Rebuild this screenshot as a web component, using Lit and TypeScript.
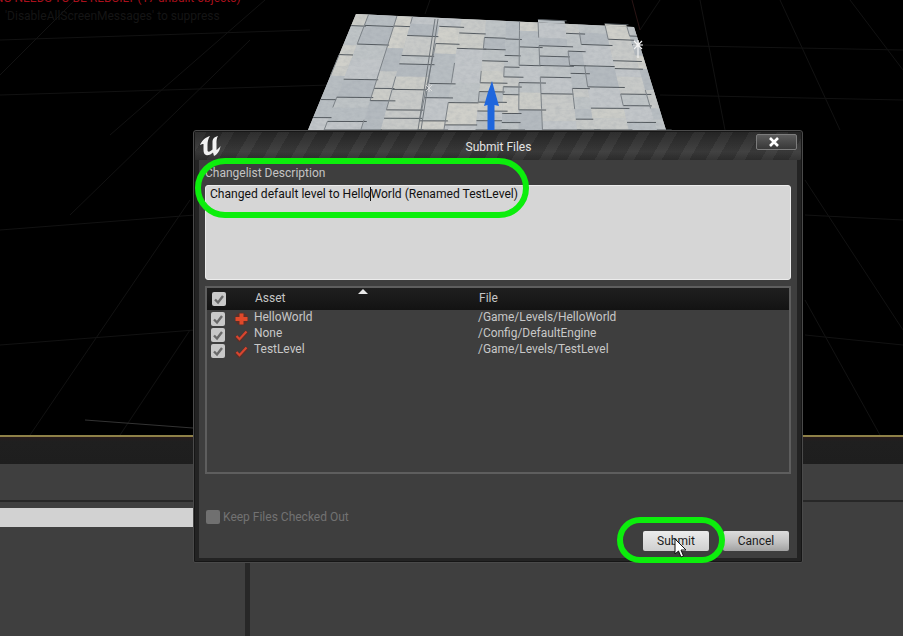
import { LitElement, css, html, svg } from 'lit';
import { customElement } from 'lit/decorators.js';

const FLOOR = { tl: [356, 14], tr: [634, 27], br: [666, 130], bl: [308, 130] };

// bilinear mapping of the floor quad, u/v in 0..1
function mapFloor(u: number, v: number): [number, number] {
  const topX = FLOOR.tl[0] + (FLOOR.tr[0] - FLOOR.tl[0]) * u;
  const topY = FLOOR.tl[1] + (FLOOR.tr[1] - FLOOR.tl[1]) * u;
  const botX = FLOOR.bl[0] + (FLOOR.br[0] - FLOOR.bl[0]) * u;
  const botY = FLOOR.bl[1] + (FLOOR.br[1] - FLOOR.bl[1]) * u;
  return [topX + (botX - topX) * v, topY + (botY - topY) * v];
}

const pt = (u: number, v: number) => mapFloor(u, v).join(',');

interface Tile {
  pts: string;
  fill: string;
  bottom: number[] | null;
  side: number[] | null;
}

function makeTiles() {
  let seed = 29;
  const rnd = () => {
    seed = (seed * 16807) % 2147483647;
    return seed / 2147483647;
  };
  const shades = ['#bfc4c6', '#c8cac8', '#b8bec2', '#cccdc8', '#c2c6c9', '#b4babf', '#d0d0ca'];
  const tiles: Tile[] = [];
  let u = 0;
  while (u < 1) {
    const w = 0.045 + rnd() * 0.06;
    const u1 = Math.min(u + w, 1);
    let v = -rnd() * 0.12;
    while (v < 1) {
      const h = 0.07 + rnd() * 0.14;
      const v0 = Math.max(v, 0);
      const v1 = Math.min(v + h, 1);
      const a = mapFloor(u, v1);
      const b = mapFloor(u1 + 0.02 * rnd(), v1);
      const c = mapFloor(u, v0);
      tiles.push({
        pts: [pt(u, v0), pt(u1, v0), pt(u1, v1), pt(u, v1)].join(' '),
        fill: shades[Math.floor(rnd() * shades.length)],
        bottom: rnd() > 0.3 ? [a[0], a[1], b[0], b[1]] : null,
        side: rnd() > 0.5 ? [a[0], a[1], c[0], c[1]] : null,
      });
      v += h;
    }
    u += w;
  }
  return tiles;
}

const TILES = makeTiles();

const GRID_LINES: number[][] = [
  [0, 40, 310, 30], [640, 45, 903, 50], [0, 95, 330, 85], [660, 95, 903, 100],
  [0, 230, 195, 215], [805, 215, 903, 220], [0, 345, 195, 330], [805, 335, 903, 345],
  [75, 0, 0, 75], [265, 0, 110, 135], [250, 40, 70, 215], [190, 200, 30, 435],
  [430, 0, 425, 14], [660, 0, 640, 30], [700, 0, 725, 130], [780, 0, 840, 130],
  [850, 0, 903, 70], [805, 180, 903, 330], [805, 300, 880, 435], [190, 330, 120, 435],
];

const ROWS = [
  { asset: 'HelloWorld', file: '/Game/Levels/HelloWorld', added: true },
  { asset: 'None', file: '/Config/DefaultEngine', added: false },
  { asset: 'TestLevel', file: '/Game/Levels/TestLevel', added: false },
];

const checkMark = svg`<path d="M3 7.5 L6 10.5 L11 4" fill="none" stroke="#6a6a6a" stroke-width="2.4"/>`;

@customElement('app-root')
export class AppRoot extends LitElement {
  static styles = css`
    :host {
      display: block;
      position: relative;
      width: 903px;
      height: 636px;
      overflow: hidden;
      background: #3f3f3f;
      font-family: Roboto, 'Liberation Sans', sans-serif;
      font-size: 12px;
      color: #c8c8c8;
    }

    .viewport {
      position: relative;
      height: 435px;
      background: #000;
      overflow: hidden;
    }

    .viewport svg {
      display: block;
    }

    .warn {
      position: absolute;
      left: -42px;
      top: -9px;
      color: #a8101c;
      font-size: 12px;
      white-space: nowrap;
    }

    .hint {
      position: absolute;
      left: 5px;
      top: 9px;
      color: #151515;
      font-size: 12px;
      white-space: nowrap;
    }

    .gold {
      height: 2px;
      background: #8f8148;
    }

    .tabstrip {
      height: 27px;
      background: linear-gradient(#2a1d1d 0, #1f1f1f 4px, #1e1e1e 100%);
    }

    .toolbar {
      height: 36px;
      border-bottom: 2px solid #272727;
    }

    .search {
      width: 193px;
      height: 19px;
      margin-top: 6px;
      background: #d2d2d2;
    }

    .lower {
      display: flex;
      height: 109px;
    }

    .lower .left {
      width: 245px;
    }

    .lower .bar {
      width: 5px;
      background: #272727;
    }

    .dialog {
      position: absolute;
      left: 193px;
      top: 130px;
      width: 610px;
      height: 433px;
      box-sizing: border-box;
      display: flex;
      flex-direction: column;
      padding: 1px 5px 4px;
      background: #232323;
      border: 1px solid #4a4a4a;
      border-radius: 3px 3px 2px 2px;
      box-shadow: inset 0 0 0 1px #161616;
    }

    .titlebar {
      height: 28px;
      flex: none;
      display: flex;
      align-items: center;
      background:
        repeating-linear-gradient(120deg, rgba(255, 255, 255, 0.035) 0 10px, rgba(0, 0, 0, 0.05) 10px 24px),
        linear-gradient(#262626, #3b3b3b 70%, #2d2d2d);
      margin: 0 -4px;
      padding: 0 0 0 4px;
    }

    .logo {
      flex: none;
      width: 24px;
      height: 22px;
    }

    .title {
      flex: 1;
      text-align: center;
      color: #e4e4e4;
      padding-left: 18px;
      margin-top: 1px;
    }

    .close {
      flex: none;
      width: 41px;
      height: 16px;
      margin: -8px 4px 0 0;
      padding-right: 5px;
      box-sizing: border-box;
      border: 1px solid #7c7c7c;
      border-radius: 2px;
      background: linear-gradient(#5c5c5c, #383838);
      display: flex;
      align-items: center;
      justify-content: center;
    }

    .body {
      flex: 1;
      display: flex;
      flex-direction: column;
      background: #3e3e3e;
      padding: 6px 6px 7px;
      min-height: 0;
    }

    .label {
      height: 19px;
      line-height: 14px;
      color: #c4c4c4;
    }

    .desc {
      height: 95px;
      box-sizing: border-box;
      flex: none;
      background: #d6d6d6;
      border: 1px solid #ececec;
      border-radius: 3px;
      padding: 1px 4px;
      line-height: 14px;
      color: #111;
      white-space: nowrap;
      font-size: 12.1px;
    }

    .caret {
      display: inline-block;
      width: 0;
      height: 14px;
      vertical-align: -3px;
      border-left: 1px solid #111;
      margin-right: -1px;
    }

    .list {
      margin-top: 6px;
      height: 188px;
      flex: none;
      box-sizing: border-box;
      border: 2px solid #5e5e5e;
    }

    .head {
      display: grid;
      grid-template-columns: 47px 224px 1fr;
      height: 22px;
      align-items: center;
      position: relative;
      background: linear-gradient(#1f1f1f, #131313);
      color: #c6c6c6;
    }

    .head .cell {
      padding: 0 0 3px 1px;
    }

    .head .check {
      margin-left: 5px;
    }

    .sort {
      position: absolute;
      left: 151px;
      top: 1px;
      width: 0;
      height: 0;
      border-left: 5px solid transparent;
      border-right: 5px solid transparent;
      border-bottom: 5px solid #e8e8e8;
    }

    .rows {
      padding-top: 1px;
    }

    .row {
      display: grid;
      grid-template-columns: 23px 20px 224px 1fr;
      grid-template-rows: 16px;
      height: 16px;
      align-items: center;
      color: #c8c8c8;
      padding-left: 4px;
      font-size: 11.95px;
    }

    .row .text {
      align-self: start;
      line-height: 14px;
      margin-top: -1px;
    }

    .row .icon {
      display: flex;
    }

    .check {
      width: 14px;
      height: 14px;
      border-radius: 2px;
      background: #c8c8c8;
      display: block;
    }

    .spacer {
      flex: 1;
    }

    .keep {
      display: flex;
      align-items: center;
      gap: 3px;
      height: 16px;
      margin-left: 1px;
      color: #727272;
    }

    .keep .box {
      width: 14px;
      height: 14px;
      background: #707070;
      border-radius: 2px;
    }

    .actions {
      display: flex;
      justify-content: flex-end;
      gap: 14px;
      margin-top: 6px;
      padding-right: 2px;
    }

    .btn {
      width: 66px;
      height: 20px;
      line-height: 20px;
      text-align: center;
      border-radius: 2px;
      color: #1b1b1b;
      background: linear-gradient(#dcdcdc, #c2c2c2 55%, #a2a2a2);
    }

    .btn.hover {
      background: linear-gradient(#ececec, #dcdcdc 55%, #cfcfcf);
    }

    .ring {
      position: absolute;
      box-sizing: border-box;
      border: 6px solid #0cee0c;
      pointer-events: none;
    }

    .ring.desc-ring {
      left: 195px;
      top: 158px;
      width: 334px;
      height: 60px;
      border-radius: 30px;
    }

    .ring.submit-ring {
      left: 617px;
      top: 517px;
      width: 108px;
      height: 46px;
      border-radius: 23px;
    }

    .cursor {
      position: absolute;
      left: 674px;
      top: 538px;
    }
  `;

  renderViewport() {
    return html`
      <div class="viewport">
        <svg width="903" height="435" viewBox="0 0 903 435">
          <defs>
            <filter id="soft"><feGaussianBlur stdDeviation="0.5" /></filter>
            <filter id="mottle" x="0" y="0" width="100%" height="100%">
              <feTurbulence type="fractalNoise" baseFrequency="0.18 0.3" numOctaves="3" seed="4" />
              <feColorMatrix values="0 0 0 0 0.3  0 0 0 0 0.33  0 0 0 0 0.37  0 0 0 1.6 -0.55" />
              <feComposite in2="SourceGraphic" operator="in" />
            </filter>
          </defs>
          ${GRID_LINES.map(
            (l) => svg`<line x1=${l[0]} y1=${l[1]} x2=${l[2]} y2=${l[3]} stroke="#121212" stroke-width="1" />`
          )}
          <line x1="632" y1="0" x2="640" y2="30" stroke="#2a1414" />
          <line x1="85" y1="420" x2="193" y2="428" stroke="#333" />
          <g filter="url(#soft)">
            <polygon points="356,14 634,27 666,130 308,130" fill="#bfc3c4" />
            ${TILES.map((t) => svg`<polygon points=${t.pts} fill=${t.fill} />`)}
            ${TILES.map((t) =>
              t.bottom
                ? svg`<line x1=${t.bottom[0]} y1=${t.bottom[1]} x2=${t.bottom[2]} y2=${t.bottom[3]} stroke="#50565b" stroke-width="1" />`
                : ''
            )}
            ${TILES.map((t) =>
              t.side
                ? svg`<line x1=${t.side[0]} y1=${t.side[1]} x2=${t.side[2]} y2=${t.side[3]} stroke="#7b8186" stroke-width="1" />`
                : ''
            )}
            <path d="M438 19 L421 130 M435 19 L418 130" stroke="#6f757a" stroke-width="1" />
          </g>
          <polygon points="356,14 634,27 666,130 308,130" fill="#fff" filter="url(#mottle)" opacity="0.28" />
          <path d="M492 81 L495 92 L499 106 L494.5 105 L494.5 130 L487.5 130 L487.5 105 L484 106 L488 92 Z" fill="#1f66dd" />
          <g stroke="#f2f2f2" stroke-width="1.2">
            <path d="M638 40 V58 M634 41 L642 49 M642 41 L634 49 M633 45 H643" />
          </g>
          <g stroke="#e4e4e4" stroke-width="1" opacity="0.8">
            <path d="M429 83 V92 M426 85 L432 91 M432 85 L426 91" />
          </g>
        </svg>
        <div class="warn">LIGHTING NEEDS TO BE REBUILT (17 unbuilt objects)</div>
        <div class="hint">'DisableAllScreenMessages' to suppress</div>
      </div>
    `;
  }

  renderLogo() {
    return html`
      <svg class="logo" viewBox="0 0 24 22">
        <path
          d="M1 10 C3 5 7 2 11 1 C9 4 8.5 7 8.5 10 L8.5 15 C8.5 17 10 17 11.5 16 L13.5 14.5 L13.5 7 C13.5 4 15 2 19 1 C17.5 3.5 17.5 6 17.5 8 L17.5 15 C18.5 14.5 20 13 21.5 11 C21 15 19 19 15 21 L14 17.5 C12 19.5 9 21 7 20 C4.5 19 4.5 16 4.5 13 L4.5 9 C3.5 9 2 9.5 1 10 Z"
          fill="#f2f2f2"
        />
      </svg>
    `;
  }

  renderStatus(added: boolean) {
    if (added) {
      return html`<svg width="15" height="14" viewBox="0 0 15 14">
        <circle cx="7.5" cy="7" r="6.5" fill="#5a3029" />
        <path d="M5.5 1.5 H9.5 V5 H13.5 V9 H9.5 V12.5 H5.5 V9 H1.5 V5 H5.5 Z" fill="#e0492a" />
      </svg>`;
    }
    return html`<svg width="15" height="14" viewBox="0 0 15 14">
      <path d="M2 8 L5.5 12 L13 3.5" fill="none" stroke="#5a3029" stroke-width="3.8" />
      <path d="M2.5 8 L5.5 11.2 L12.5 3.5" fill="none" stroke="#d8452f" stroke-width="2.2" />
    </svg>`;
  }

  renderDialog() {
    return html`
      <div class="dialog">
        <div class="titlebar">
          ${this.renderLogo()}
          <div class="title">Submit Files</div>
          <div class="close">
            <svg width="12" height="10" viewBox="0 0 12 10">
              <path d="M2 1 L10 9 M10 1 L2 9" stroke="#fff" stroke-width="2.6" />
            </svg>
          </div>
        </div>
        <div class="body">
          <div class="label">Changelist Description</div>
          <div class="desc">Changed default level to Hello<span class="caret"></span>World (Renamed TestLevel)</div>
          <div class="list">
            <div class="head">
              <svg class="check" viewBox="0 0 14 14">${checkMark}</svg>
              <div class="cell">Asset</div>
              <div class="cell">File</div>
              <div class="sort"></div>
            </div>
            <div class="rows">
              ${ROWS.map(
                (r) => html`
                  <div class="row">
                    <svg class="check" viewBox="0 0 14 14">${checkMark}</svg>
                    <div class="icon">${this.renderStatus(r.added)}</div>
                    <div class="text">${r.asset}</div>
                    <div class="text">${r.file}</div>
                  </div>
                `
              )}
            </div>
          </div>
          <div class="spacer"></div>
          <div class="keep">
            <div class="box"></div>
            <div>Keep Files Checked Out</div>
          </div>
          <div class="actions">
            <div class="btn hover">Submit</div>
            <div class="btn">Cancel</div>
          </div>
        </div>
      </div>
    `;
  }

  render() {
    return html`
      ${this.renderViewport()}
      <div class="gold"></div>
      <div class="tabstrip"></div>
      <div class="toolbar"></div>
      <div class="search"></div>
      <div class="lower">
        <div class="left"></div>
        <div class="bar"></div>
      </div>
      ${this.renderDialog()}
      <div class="ring desc-ring"></div>
      <div class="ring submit-ring"></div>
      <svg class="cursor" width="14" height="21" viewBox="0 0 14 21">
        <path d="M1 1 V16 L4.5 13 L7 19 L9.5 18 L7 12 H12 Z" fill="#fff" stroke="#111" stroke-width="1" />
      </svg>
    `;
  }
}
